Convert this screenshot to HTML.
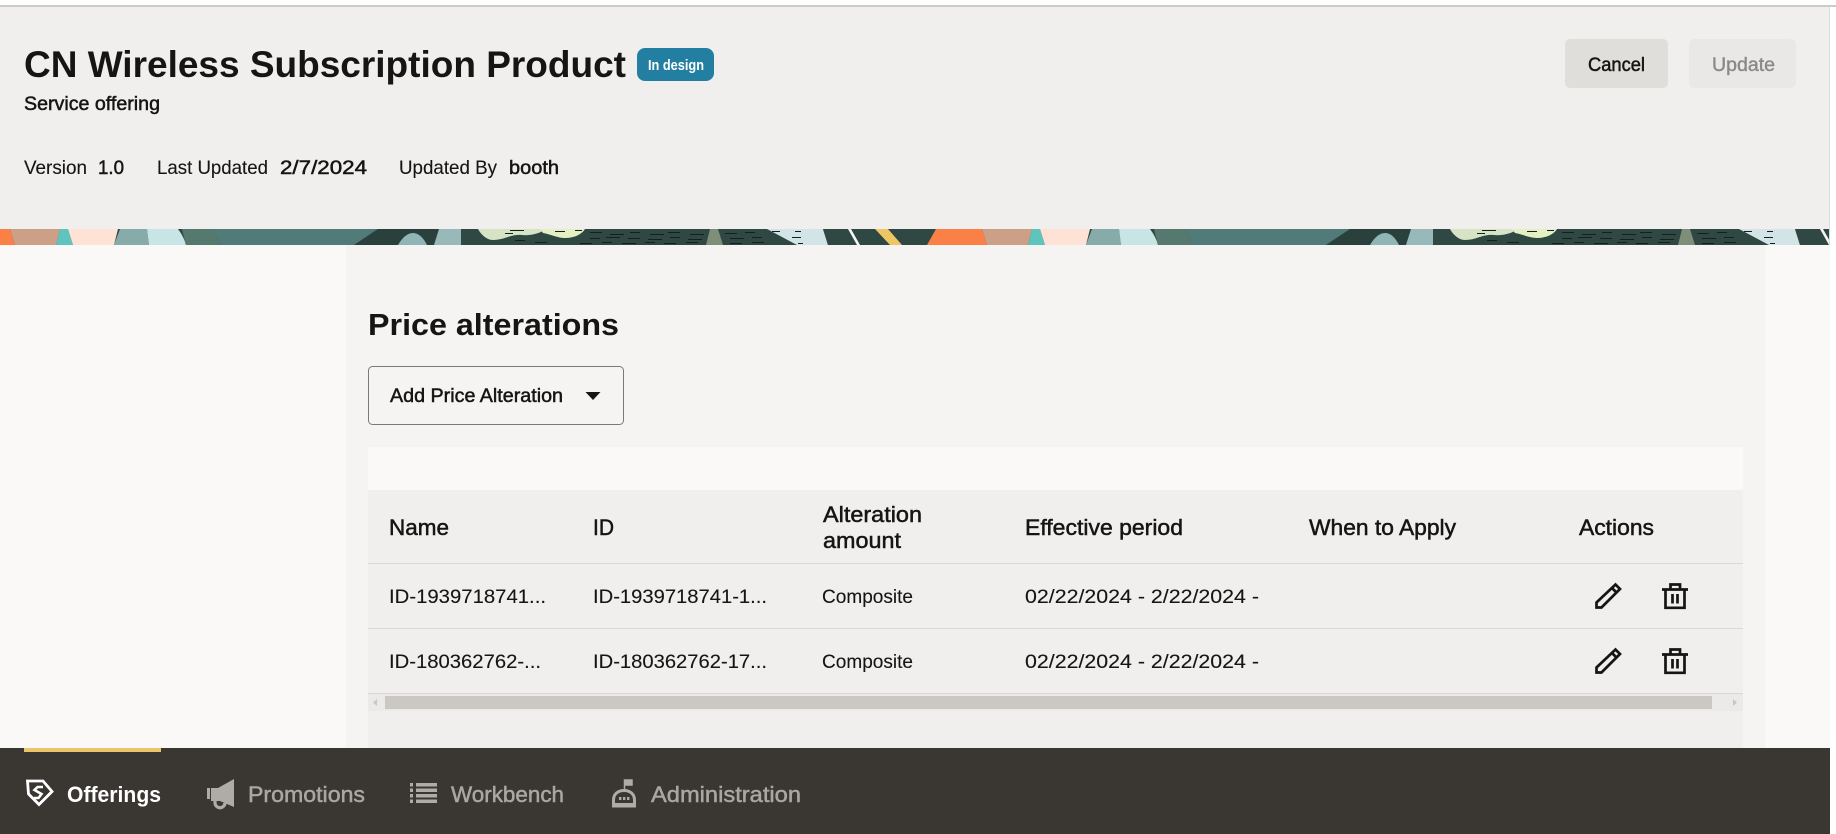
<!DOCTYPE html>
<html lang="en">
<head>
<meta charset="utf-8">
<title>Price alterations</title>
<style>
html,body{margin:0;padding:0;width:1836px;height:834px;overflow:hidden;background:#fff}
svg{display:block;position:absolute;left:0;top:0}
text{font-family:"Liberation Sans",sans-serif;fill:#161513;white-space:pre}
.b{font-weight:700}
.m{stroke:#161513;stroke-width:.5px}
.l{stroke:#161513;stroke-width:.12px}
.r{font-size:19.5px}
.h{font-size:22px}
.n{fill:#a9a7a4;stroke:#a9a7a4;stroke-width:.5px;font-size:22.5px}
</style>
</head>
<body>
<svg width="1836" height="834" viewBox="0 0 1836 834" xmlns="http://www.w3.org/2000/svg">
<defs>
<g id="tile">
  <rect x="0" y="0" width="972" height="16" fill="#2f4843"/>
  <polygon points="-36,0 10,0 15,16 -45,16" fill="#fb8048"/>
  <polygon points="10,0 60,0 56,16 15,16" fill="#cba087"/>
  <polygon points="60,0 68,0 73,16 56,16" fill="#5fc4bc"/>
  <polygon points="68,0 118,0 114,16 73,16" fill="#ffe2d6"/>
  <path d="M120 0H147L149 16H114Z" fill="#86aba9"/>
  <path d="M147 0H178Q184 8 186 16H149Z" fill="#c7e5e4"/>
  <polygon points="182,0 213,0 221,16 186,16" fill="#56796f"/>
  <polygon points="213,0 378,0 354,16 221,16" fill="#507b79"/>
  <polygon points="378,0 440,0 433,16 354,16" fill="#2a403c"/>
  <path d="M398 16Q405 4 413 4T427 16Z" fill="#8fb5b5"/>
  <polygon points="439,0 461,0 461,16 434,16" fill="#97b9b9"/>
  <polygon points="461,0 767,0 797,16 461,16" fill="#2f4843"/>
  <path d="M478 0H545C542 4 530 7 522 6C510 5 505 11 493 11C486 11 480 4 478 0Z" fill="#d6e3c4"/>
  <path d="M540 0H585C582 5 575 9 565 9C557 9 550 5 543 4Z" fill="#e4efc4"/>
  <polygon points="710,0 718,0 723,16 706,16" fill="#7d8f78"/>
  <polygon points="767,0 823,0 828,16 797,16" fill="#d3e4e6"/>
  <polygon points="823,0 936,0 927,16 828,16" fill="#2f4843"/>
  <polygon points="848,0 851,0 860,16 857,16" fill="#f4f6f4"/>
  <polygon points="875,0 888,0 902,16 890,16" fill="#efc664"/>
  <g fill="#15201d">
    <rect x="510" y="1" width="14" height="1"/><rect x="555" y="2" width="10" height="1"/><rect x="575" y="1" width="7" height="1"/>
    <rect x="505" y="4" width="8" height="1"/><rect x="515" y="11" width="10" height="1"/><rect x="535" y="13" width="12" height="1"/>
    <rect x="590" y="3" width="12" height="1"/><rect x="610" y="5" width="14" height="1"/><rect x="630" y="3" width="10" height="1"/>
    <rect x="650" y="5" width="14" height="1"/><rect x="668" y="3" width="12" height="1"/><rect x="690" y="5" width="14" height="1"/>
    <rect x="590" y="9" width="10" height="1"/><rect x="606" y="8" width="14" height="1"/><rect x="628" y="9" width="12" height="1"/>
    <rect x="648" y="10" width="14" height="1"/><rect x="670" y="8" width="10" height="1"/><rect x="688" y="10" width="14" height="1"/>
    <rect x="580" y="14" width="12" height="1"/><rect x="602" y="13" width="10" height="1"/><rect x="622" y="14" width="14" height="1"/>
    <rect x="645" y="13" width="10" height="1"/><rect x="664" y="14" width="12" height="1"/><rect x="686" y="13" width="12" height="1"/>
    <rect x="725" y="4" width="12" height="1"/><rect x="745" y="3" width="10" height="1"/><rect x="730" y="9" width="14" height="1"/>
    <rect x="752" y="8" width="10" height="1"/><rect x="730" y="14" width="12" height="1"/><rect x="752" y="13" width="12" height="1"/>
    <rect x="772" y="2" width="8" height="1"/><rect x="795" y="2" width="6" height="1"/><rect x="792" y="8" width="9" height="1"/><rect x="798" y="14" width="5" height="1"/>
  </g>
</g>
<clipPath id="bandclip"><rect x="0" y="229" width="1829" height="16"/></clipPath>
<g id="pencil" fill="none" stroke="#161513" stroke-width="2.7">
  <path d="M1.5 24.5V19.5L20.5 1.5L25 6L6.5 24.5Z" stroke-linejoin="miter"/>
  <path d="M17 5L21.5 9.5"/>
</g>
<g id="trash" fill="none" stroke="#161513" stroke-width="2.7">
  <path d="M0 6.5H26"/>
  <path d="M8.5 6V1.5H18V6"/>
  <path d="M3.5 6.5V24.8H22.5V6.5"/>
  <path d="M10.5 11V20.5M15.5 11V20.5"/>
</g>
</defs>

<!-- page -->
<rect width="1836" height="834" fill="#fff"/>
<rect x="0" y="5" width="1836" height="2" fill="#c9ccc8"/>
<rect x="0" y="7" width="1829" height="222" fill="#f0efed"/>
<rect x="1829" y="7" width="1" height="741" fill="#dcdcd9"/>

<!-- decorative band -->
<g clip-path="url(#bandclip)">
  <use href="#tile" transform="translate(0 229)"/>
  <use href="#tile" transform="translate(972 229)"/>
</g>

<!-- body background -->
<rect x="0" y="245" width="1830" height="503" fill="#faf9f7"/>
<rect x="346" y="245" width="1419" height="503" fill="#f5f4f2"/>

<!-- header -->
<text x="24" y="77" class="b" font-size="37" textLength="602" lengthAdjust="spacingAndGlyphs">CN Wireless Subscription Product</text>
<rect x="637" y="48" width="77" height="33" rx="8" fill="#227fa1"/>
<text x="648" y="70" class="b" font-size="15" style="fill:#fff" textLength="56" lengthAdjust="spacingAndGlyphs">In design</text>
<text x="24" y="110" class="r m" textLength="136" lengthAdjust="spacingAndGlyphs">Service offering</text>

<text x="24" y="174" class="r l" textLength="63" lengthAdjust="spacingAndGlyphs">Version</text>
<text x="98" y="174" class="r m" textLength="26" lengthAdjust="spacingAndGlyphs">1.0</text>
<text x="157" y="174" class="r l" textLength="111" lengthAdjust="spacingAndGlyphs">Last Updated</text>
<text x="280" y="174" class="r m" textLength="87" lengthAdjust="spacingAndGlyphs">2/7/2024</text>
<text x="399" y="174" class="r l" textLength="98" lengthAdjust="spacingAndGlyphs">Updated By</text>
<text x="509" y="174" class="r m" textLength="50" lengthAdjust="spacingAndGlyphs">booth</text>

<rect x="1565" y="39" width="103" height="49" rx="5" fill="#dfdedb"/>
<text x="1588" y="71" class="r m" textLength="57" lengthAdjust="spacingAndGlyphs">Cancel</text>
<rect x="1689" y="39" width="107" height="49" rx="5" fill="#e9e8e6"/>
<text x="1712" y="71" class="r" style="fill:#8b8986;stroke:#8b8986;stroke-width:.4px" textLength="63" lengthAdjust="spacingAndGlyphs">Update</text>

<!-- section -->
<text x="368" y="335" class="b" font-size="31" textLength="251" lengthAdjust="spacingAndGlyphs">Price alterations</text>
<rect x="368.5" y="366.5" width="255" height="58" rx="4" fill="#f5f4f2" stroke="#7d7a75" stroke-width="1"/>
<text x="390" y="402" class="r m" textLength="173" lengthAdjust="spacingAndGlyphs">Add Price Alteration</text>
<polygon points="585.5,392 600.5,392 593,400" fill="#161513"/>

<!-- table -->
<rect x="368" y="447" width="1375" height="43" fill="#faf9f7"/>
<rect x="368" y="490" width="1375" height="258" fill="#f1efed"/>
<text x="389" y="535" class="h m" textLength="60" lengthAdjust="spacingAndGlyphs">Name</text>
<text x="593" y="535" class="h m" textLength="21" lengthAdjust="spacingAndGlyphs">ID</text>
<text x="823" y="522" class="h m" textLength="99" lengthAdjust="spacingAndGlyphs">Alteration</text>
<text x="823" y="548" class="h m" textLength="78" lengthAdjust="spacingAndGlyphs">amount</text>
<text x="1025" y="535" class="h m" textLength="158" lengthAdjust="spacingAndGlyphs">Effective period</text>
<text x="1309" y="535" class="h m" textLength="147" lengthAdjust="spacingAndGlyphs">When to Apply</text>
<text x="1579" y="535" class="h m" textLength="75" lengthAdjust="spacingAndGlyphs">Actions</text>
<rect x="368" y="563" width="1375" height="1" fill="#dad8d5"/>

<text x="389" y="603" class="r l" textLength="157" lengthAdjust="spacingAndGlyphs">ID-1939718741...</text>
<text x="593" y="603" class="r l" textLength="174" lengthAdjust="spacingAndGlyphs">ID-1939718741-1...</text>
<text x="822" y="603" class="r l" textLength="91" lengthAdjust="spacingAndGlyphs">Composite</text>
<text x="1025" y="603" class="r l" textLength="234" lengthAdjust="spacingAndGlyphs">02/22/2024 - 2/22/2024 -</text>
<use href="#pencil" x="1595" y="583"/>
<use href="#trash" x="1662" y="583"/>
<rect x="368" y="628" width="1375" height="1" fill="#dad8d5"/>

<text x="389" y="668" class="r l" textLength="152" lengthAdjust="spacingAndGlyphs">ID-180362762-...</text>
<text x="593" y="668" class="r l" textLength="174" lengthAdjust="spacingAndGlyphs">ID-180362762-17...</text>
<text x="822" y="668" class="r l" textLength="91" lengthAdjust="spacingAndGlyphs">Composite</text>
<text x="1025" y="668" class="r l" textLength="234" lengthAdjust="spacingAndGlyphs">02/22/2024 - 2/22/2024 -</text>
<use href="#pencil" x="1595" y="648"/>
<use href="#trash" x="1662" y="648"/>
<rect x="368" y="693" width="1375" height="1" fill="#dad8d5"/>

<!-- scrollbar -->
<rect x="368" y="694" width="1375" height="17" fill="#ebeae8"/>
<rect x="385" y="696" width="1327" height="13" fill="#cbc8c4"/>
<polygon points="377,699 373,702.5 377,706" fill="#c9c7c3"/>
<polygon points="1733,699 1737,702.5 1733,706" fill="#c9c7c3"/>

<!-- bottom nav -->
<rect x="0" y="748" width="1830" height="86" fill="#3a3631"/>
<rect x="24" y="748" width="137" height="4" fill="#ecc56a"/>

<g transform="translate(26 779)" fill="none" stroke="#fff" stroke-width="2.8">
  <path d="M1.5 2H17L26 12.5L13 25.5L2.5 15Z"/>
  <path d="M17 8H11.5L8.5 11L15.5 15L12.5 19H8" stroke-width="2.6"/>
</g>
<text x="67" y="802" class="b" font-size="22.5" style="fill:#fff" textLength="94" lengthAdjust="spacingAndGlyphs">Offerings</text>

<g transform="translate(207 779)" fill="#aeaca9">
  <path d="M27 0V28L13 22H4V9H11Z"/>
  <path d="M0 9H3V20H0Z"/>
  <path d="M8 20V23.5A5 5 0 0 0 18 24" fill="none" stroke="#aeaca9" stroke-width="3.2"/>
</g>
<text x="248" y="802" class="n" textLength="117" lengthAdjust="spacingAndGlyphs">Promotions</text>

<g transform="translate(410 783)" fill="#aeaca9">
  <rect x="0" y="0" width="3" height="3.5"/><rect x="6" y="0" width="21" height="3.5"/>
  <rect x="0" y="5.5" width="3" height="3.5"/><rect x="6" y="5.5" width="21" height="3.5"/>
  <rect x="0" y="11" width="3" height="3.5"/><rect x="6" y="11" width="21" height="3.5"/>
  <rect x="0" y="16.5" width="3" height="3.5"/><rect x="6" y="16.5" width="21" height="3.5"/>
</g>
<text x="451" y="802" class="n" textLength="113" lengthAdjust="spacingAndGlyphs">Workbench</text>

<g transform="translate(612 779)">
  <path d="M12.5 12V1H20V6H13" fill="#aeaca9" stroke="#aeaca9" stroke-width="1.5"/>
  <path d="M1.5 27V21C1.5 15 6 11.5 12 11.5C18 11.5 22.5 15 22.5 21V27Z" fill="none" stroke="#aeaca9" stroke-width="3"/>
  <rect x="1" y="24" width="22" height="3.5" fill="#aeaca9"/>
  <rect x="7" y="18" width="2.4" height="3" fill="#aeaca9"/><rect x="11" y="18" width="2.4" height="3" fill="#aeaca9"/><rect x="15" y="18" width="2.4" height="3" fill="#aeaca9"/>
</g>
<text x="651" y="802" class="n" textLength="150" lengthAdjust="spacingAndGlyphs">Administration</text>
</svg>
</body>
</html>
